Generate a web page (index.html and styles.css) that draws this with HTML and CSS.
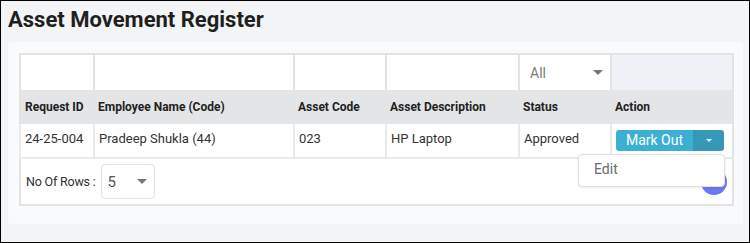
FILE: index.html
```html
<!DOCTYPE html>
<html>

<head>
    <meta name="viewport" content="width=device-width, initial-scale=1.0">
    <link rel="stylesheet" href="styles.css">
</head>

<body>
    <div class="frame">
        <h1 class="title">Asset Movement Register</h1>
        <div class="card">
            <table class="grid">
                <colgroup>
                    <col style="width: 74px">
                    <col style="width: 200px">
                    <col style="width: 92px">
                    <col style="width: 133px">
                    <col style="width: 92px">
                    <col style="width: 122px">
                </colgroup>
                <tr class="filters">
                    <td></td>
                    <td></td>
                    <td></td>
                    <td></td>
                    <td>
                        <div class="select">
                            <span>All</span>
                            <span class="caret"></span>
                        </div>
                    </td>
                    <td class="blank"></td>
                </tr>
                <tr class="head">
                    <th>Request ID</th>
                    <th>Employee Name (Code)</th>
                    <th>Asset Code</th>
                    <th>Asset Description</th>
                    <th>Status</th>
                    <th>Action</th>
                </tr>
                <tr class="data">
                    <td>24-25-004</td>
                    <td>Pradeep Shukla (44)</td>
                    <td>023</td>
                    <td>HP Laptop</td>
                    <td>Approved</td>
                    <td class="action">
                        <div class="split">
                            <span class="main">Mark Out</span>
                            <span class="toggle"><span class="caret white"></span></span>
                        </div>
                        <div class="menu">
                            <div class="item">Edit</div>
                        </div>
                    </td>
                </tr>
                <tr class="footer">
                    <td colspan="6">
                        <div class="footbar">
                            <div class="rows">
                                <span>No Of Rows :</span>
                                <div class="rowselect">
                                    <span>5</span>
                                    <span class="caret"></span>
                                </div>
                            </div>
                            <div class="page"></div>
                        </div>
                    </td>
                </tr>
            </table>
        </div>
    </div>
</body>

</html>
```

FILE: styles.css
```css
* {
    box-sizing: border-box;
}

body {
    margin: 0;
    font-family: Roboto, "Liberation Sans", sans-serif;
    color: #333;
}

.frame {
    width: 750px;
    height: 243px;
    border: 1px solid #000;
    background-color: #f3f4f6;
    overflow: hidden;
}

.title {
    margin: 0;
    padding: 6px 0 0 7px;
    height: 41px;
    font-size: 22px;
    font-weight: 700;
    color: #1f1f1f;
}

.card {
    margin-left: 7px;
    width: 735px;
    height: 182px;
    padding: 11px 11px;
    background-color: #f9fafb;
    border-radius: 4px;
}

.grid {
    width: 713px;
    table-layout: fixed;
    border-collapse: collapse;
    border: 2px solid #e2e3e5;
    background-color: #fff;
}

.grid td,
.grid th {
    padding: 0 4px;
    font-size: 13px;
    text-align: left;
    white-space: nowrap;
}

.filters td {
    height: 36px;
    border-left: 2px solid #e2e3e5;
    background-color: #fff;
}

.filters td.blank {
    background-color: #eef2f6;
}

.head th {
    height: 34px;
    background-color: #e4e5e7;
    font-size: 12px;
    font-weight: 700;
    color: #222;
}

.data td {
    height: 34px;
    padding-bottom: 4px;
    border-left: 2px solid #e9eaec;
    border-bottom: 2px solid #e9eaec;
}

.select {
    display: flex;
    justify-content: space-between;
    align-items: center;
    padding: 0 3px 0 6px;
    font-size: 14px;
    color: #7b7b7b;
}

.caret {
    width: 0;
    height: 0;
    border-left: 5px solid transparent;
    border-right: 5px solid transparent;
    border-top: 5px solid #777;
}

.caret.white {
    border-left-width: 3px;
    border-right-width: 3px;
    border-top: 3px solid #fff;
}

.action {
    position: relative;
}

.split {
    display: flex;
    width: 108px;
    height: 21px;
    margin-top: 3px;
    border-radius: 3px;
    overflow: hidden;
    color: #fff;
    font-size: 14px;
}

.split .main {
    width: 77px;
    display: flex;
    align-items: center;
    justify-content: center;
    background-color: #3bb0d2;
}

.split .toggle {
    flex: 1;
    display: flex;
    align-items: center;
    justify-content: center;
    background-color: #3598b7;
}

.menu {
    position: absolute;
    top: 30px;
    left: -34px;
    width: 147px;
    height: 33px;
    background-color: #fff;
    border: 1px solid #e0e0e0;
    border-radius: 4px;
    box-shadow: 0 1px 3px rgba(0, 0, 0, 0.08);
    z-index: 2;
}

.menu .item {
    padding: 6px 0 0 15px;
    font-size: 14px;
    color: #6b6b6b;
}

.footer td {
    height: 47px;
    padding: 0 5px 0 5px;
}

.footbar {
    display: flex;
    justify-content: space-between;
    align-items: center;
}

.rows {
    display: flex;
    align-items: center;
    gap: 5px;
    font-size: 12.5px;
    letter-spacing: -0.2px;
}

.rowselect {
    display: flex;
    justify-content: space-between;
    align-items: center;
    width: 54px;
    height: 35px;
    padding: 0 7px 0 6px;
    border: 1px solid #e3e3e3;
    border-radius: 4px;
    font-size: 15px;
    color: #555;
    letter-spacing: 0;
}

.page {
    width: 26px;
    height: 26px;
    border-radius: 50%;
    background-color: #6c7aef;
}
```
